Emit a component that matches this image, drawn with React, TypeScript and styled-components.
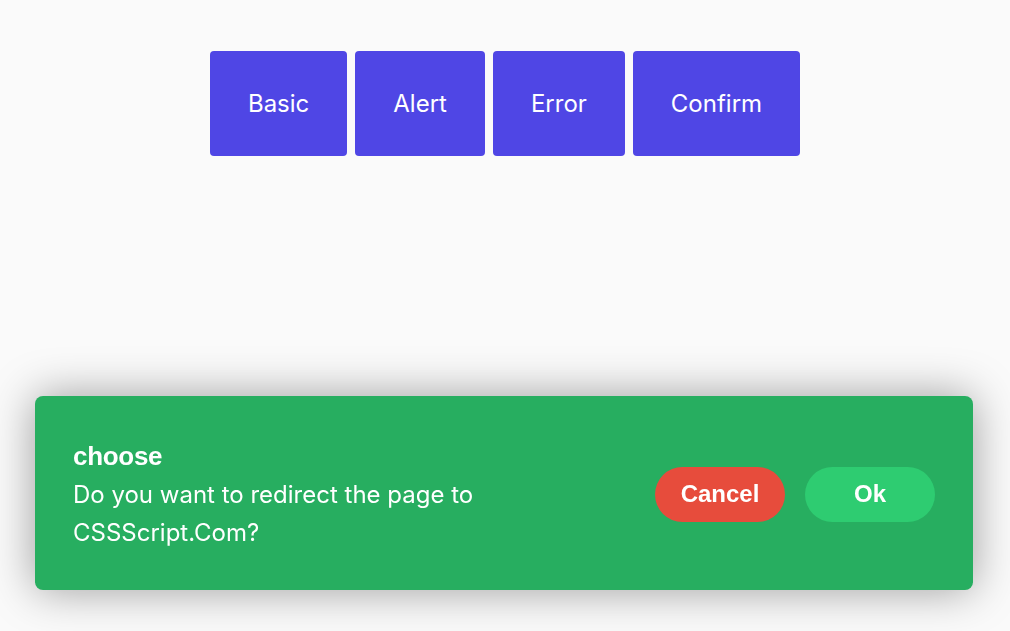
import React from 'react';
import { styled, createGlobalStyle } from 'styled-components';

const GlobalStyle = createGlobalStyle`
  html, body {
    margin: 0;
    padding: 0;
    background: #fafafa;
    font-family: Inter, "Liberation Sans", sans-serif;
  }
`;

const Page = styled.main`
  min-height: 100vh;
  box-sizing: border-box;
  padding-top: 51px;
`;

const Toolbar = styled.div`
  display: flex;
  justify-content: center;
  gap: 8px;
`;

const DemoButton = styled.button`
  height: 105px;
  padding: 0 38px;
  border: none;
  border-radius: 4px;
  background: #4f46e5;
  color: #fff;
  font-family: Inter, sans-serif;
  font-size: 24px;
  font-weight: 400;
  cursor: pointer;
`;

const Toast = styled.section`
  position: fixed;
  left: 35px;
  right: 37px;
  bottom: 41px;
  display: flex;
  align-items: center;
  justify-content: space-between;
  padding: 40px 38px 38px;
  border-radius: 8px;
  background: #27ae60;
  color: #fff;
  box-shadow: 0 0 45px rgba(0, 0, 0, 0.38);
`;

const Body = styled.div`
  max-width: 440px;
`;

const Title = styled.h2`
  margin: 0;
  font-family: "Liberation Sans", Arial, sans-serif;
  font-size: 26px;
  font-weight: 700;
  line-height: 40px;
  letter-spacing: -0.3px;
`;

const Message = styled.p`
  margin: 0;
  font-family: Inter, sans-serif;
  font-size: 24px;
  line-height: 38px;
`;

const Actions = styled.div`
  display: flex;
  gap: 20px;
`;

const Pill = styled.button<{ $tone: 'danger' | 'ok' }>`
  width: 130px;
  height: 55px;
  border: none;
  border-radius: 28px;
  background: ${(p) => (p.$tone === 'danger' ? '#e74c3c' : '#2ecc71')};
  color: #fff;
  font-family: "Liberation Sans", Arial, sans-serif;
  font-size: 24px;
  font-weight: 700;
  cursor: pointer;
`;

export default function App() {
  return (
    <>
      <GlobalStyle />
      <Page>
        <Toolbar>
          <DemoButton>Basic</DemoButton>
          <DemoButton>Alert</DemoButton>
          <DemoButton>Error</DemoButton>
          <DemoButton>Confirm</DemoButton>
        </Toolbar>
        <Toast>
          <Body>
            <Title>choose</Title>
            <Message>Do you want to redirect the page to CSSScript.Com?</Message>
          </Body>
          <Actions>
            <Pill $tone='danger'>Cancel</Pill>
            <Pill $tone='ok'>Ok</Pill>
          </Actions>
        </Toast>
      </Page>
    </>
  );
}
